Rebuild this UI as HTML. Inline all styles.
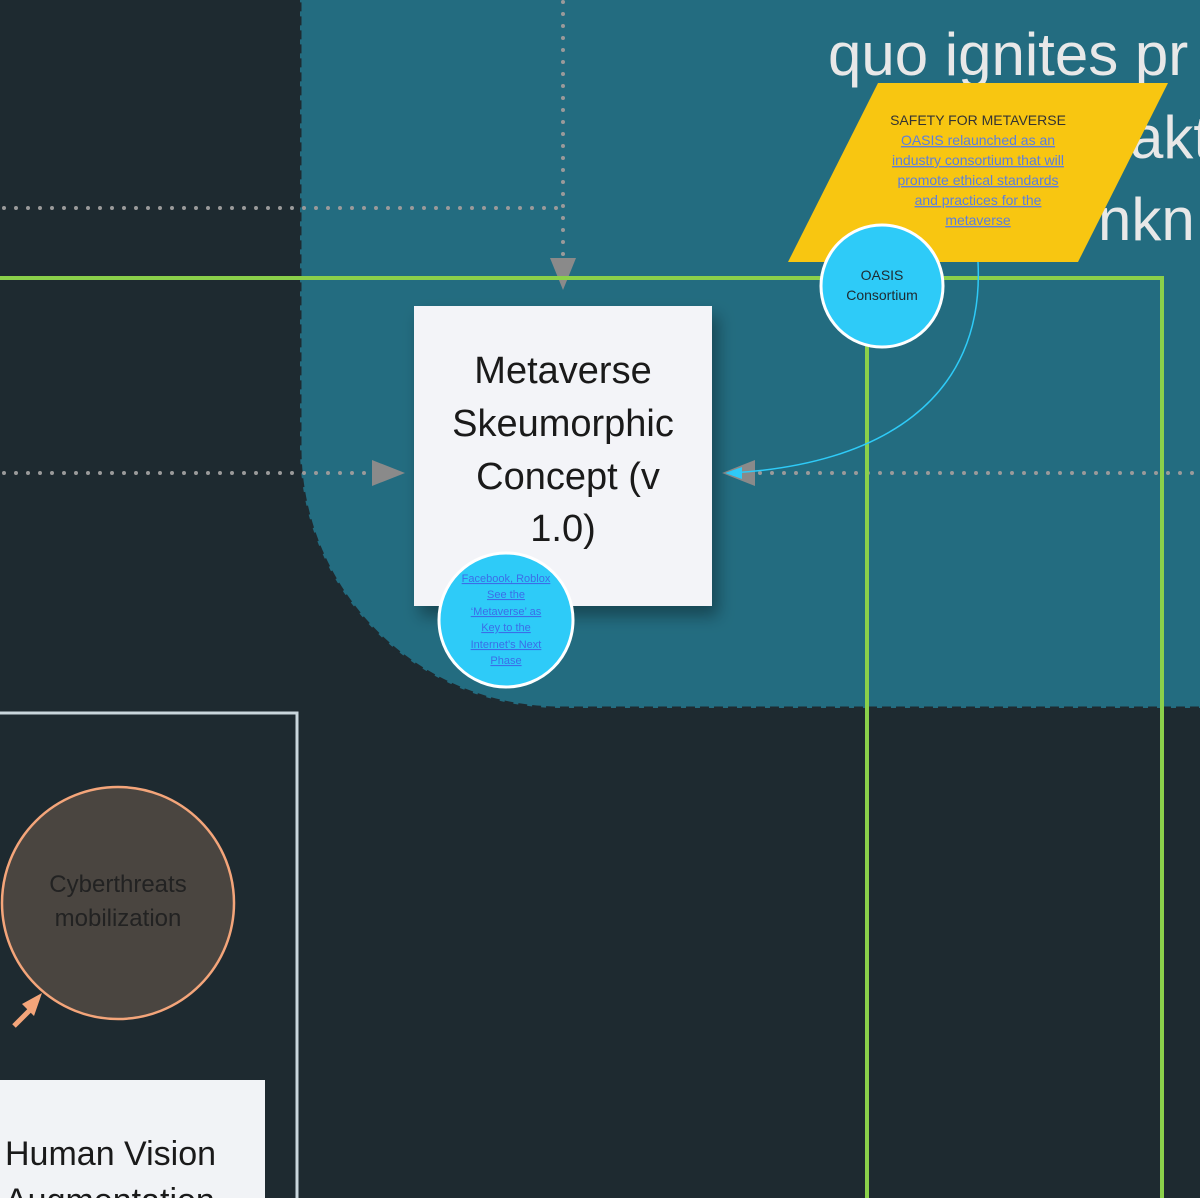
<!DOCTYPE html>
<html><head><meta charset="utf-8"><style>
html,body{margin:0;padding:0;background:#1e2a30;}
svg{display:block;font-family:"Liberation Sans",sans-serif;}
</style></head><body>
<svg width="1200" height="1198" viewBox="0 0 1200 1198" xmlns="http://www.w3.org/2000/svg">
<defs>
<filter id="sh" x="-20%" y="-20%" width="150%" height="150%"><feDropShadow dx="6" dy="10" stdDeviation="8" flood-color="#000" flood-opacity="0.35"/></filter>
</defs>
<rect width="1200" height="1198" fill="#1e2a30"/>
<path d="M300,-5 H1205 V708 H560 A260 260 0 0 1 300 448 Z" fill="#236c80" stroke="#1e2a30" stroke-width="3" stroke-dasharray="9 5"/>
<g fill="#e8e8e8" font-size="60">
<text x="828" y="75">quo ignites pr</text>
<text x="1130" y="158">akt</text>
<text x="1098" y="240">nkn</text>
</g>
<!-- dotted lines -->
<g stroke="#9a9a9a" stroke-width="4" stroke-linecap="round" stroke-dasharray="0 12" fill="none">
<line x1="4" y1="208" x2="563" y2="208"/>
<line x1="563" y1="2" x2="563" y2="258"/>
<line x1="4" y1="473" x2="366" y2="473"/>
<line x1="760" y1="473" x2="1200" y2="473"/>
</g>
<g fill="#8a8a8a">
<polygon points="550,258 576,258 563,290"/>
<polygon points="372,460 405,473 372,486"/>
<polygon points="755,460 722,473 755,486"/>
</g>
<!-- green lines -->
<g stroke="#8bd04a" stroke-width="4" fill="none">
<polyline points="0,278 1162,278 1162,1200"/>
<line x1="867" y1="345" x2="867" y2="1200"/>
</g>
<!-- blue connector -->
<path d="M978,262 C985,400 880,465 730,473" stroke="#2ecbf8" stroke-width="1.5" fill="none"/>
<polygon points="725,473 742,467 742,479" fill="#2ecbf8"/>
<!-- parallelogram -->
<polygon points="878,83 1168,83 1078,262 788,262" fill="#f8c611"/>
<g font-size="14" text-anchor="middle">
<text x="978" y="125" fill="#333">SAFETY FOR METAVERSE</text>
<g fill="#5b7ee0" text-decoration="underline">
<text x="978" y="145">OASIS relaunched as an</text>
<text x="978" y="165">industry consortium that will</text>
<text x="978" y="185">promote ethical standards</text>
<text x="978" y="205">and practices for the</text>
<text x="978" y="225">metaverse</text>
</g>
</g>
<circle cx="882" cy="286" r="61" fill="#2ecbf8" stroke="#fff" stroke-width="3"/>
<g font-size="14" fill="#1e2a30" text-anchor="middle">
<text x="882" y="280">OASIS</text>
<text x="882" y="300">Consortium</text>
</g>
<!-- sticky note -->
<rect x="414" y="306" width="298" height="300" fill="#f3f4f8" filter="url(#sh)"/>
<g font-size="38" fill="#1a1a1a" text-anchor="middle">
<text x="563" y="383">Metaverse</text>
<text x="563" y="436">Skeumorphic</text>
<text x="568" y="489">Concept (v</text>
<text x="563" y="541">1.0)</text>
</g>
<circle cx="506" cy="620" r="67" fill="#2ecbf8" stroke="#fff" stroke-width="3"/>
<g font-size="11" fill="#3b6ee8" text-anchor="middle" text-decoration="underline">
<text x="506" y="582">Facebook, Roblox</text>
<text x="506" y="598">See the</text>
<text x="506" y="615">‘Metaverse’ as</text>
<text x="506" y="631">Key to the</text>
<text x="506" y="648">Internet’s Next</text>
<text x="506" y="664">Phase</text>
</g>
<!-- bottom left -->
<rect x="-5" y="713" width="302" height="500" fill="none" stroke="#c9d6dc" stroke-width="3"/>
<circle cx="118" cy="903" r="116" fill="#4a4540" stroke="#f4a57a" stroke-width="2.5"/>
<g font-size="24" fill="#222" text-anchor="middle">
<text x="118" y="892">Cyberthreats</text>
<text x="118" y="926">mobilization</text>
</g>
<line x1="14" y1="1026" x2="32" y2="1008" stroke="#f4a57a" stroke-width="5"/>
<polygon points="42,993 22,1004 34,1016" fill="#f4a57a"/>
<rect x="-5" y="1080" width="270" height="130" fill="#f1f3f6"/>
<g font-size="34" fill="#1a1a1a">
<text x="5" y="1165">Human Vision</text>
<text x="5" y="1212">Augmentation</text>
</g>
</svg>
</body></html>
